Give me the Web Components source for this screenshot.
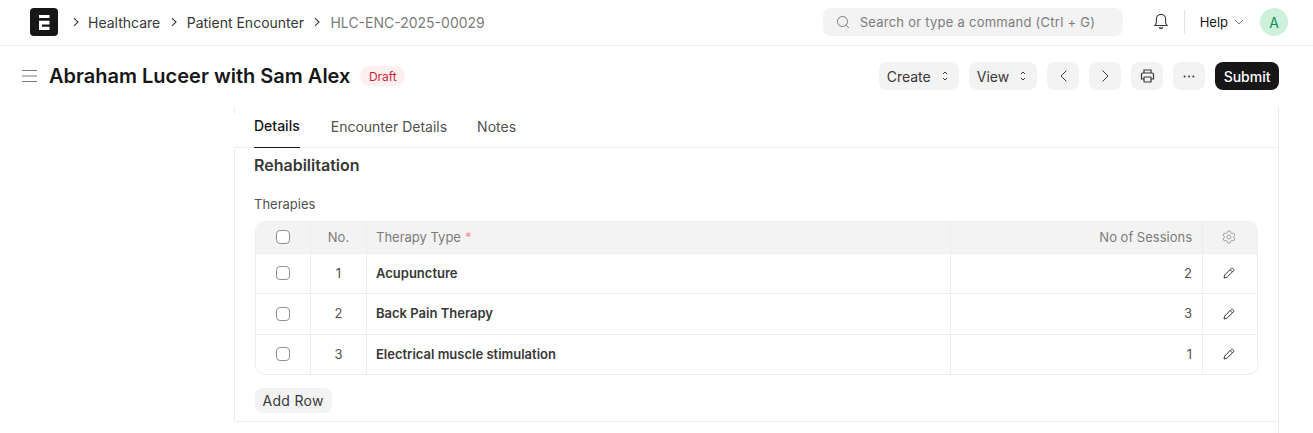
<!DOCTYPE html>
<html>
<head>
<meta charset="utf-8">
<title>Abraham Luceer with Sam Alex</title>
<style>
  html, body { margin: 0; height: 433px; overflow: hidden; background: #fff; }
  body { font-family: Inter, "Noto Sans", sans-serif; color: #383838; }
</style>
</head>
<body>
<app-navbar></app-navbar>
<page-head></page-head>
<form-card>
  <form-tabs></form-tabs>
  <therapy-section></therapy-section>
</form-card>

<script>
class AppNavbar extends HTMLElement {
  constructor() {
    super();
    this.attachShadow({ mode: "open" });
  }

  connectedCallback() {
    const sep = `<svg class="sep" width="8" height="10" viewBox="0 0 8 10" fill="none" stroke="#383838" stroke-width="1.1"><path d="M2 1.2 6 5 2 8.8"/></svg>`;
    this.shadowRoot.innerHTML = /* html */`
    <style>
      :host {
        display: flex;
        align-items: center;
        box-sizing: border-box;
        height: 46px;
        padding: 0 25px 1px 30px;
        border-bottom: 1px solid #ededed;
        font-size: 14px;
      }
      .logo {
        width: 28px;
        height: 28px;
        border-radius: 4px;
        background: #171717;
        display: flex;
        align-items: center;
        justify-content: center;
        margin-right: 14px;
      }
      .crumbs { display: flex; align-items: center; color: #383838; flex: 1; }
      .crumbs span { margin: 0 9.5px 0 9px; }
      .crumbs span:first-of-type { margin-left: 8px; }
      .crumbs span.now { color: #7c7c7c; }
      .search {
        box-sizing: border-box;
        width: 300px;
        height: 28px;
        border-radius: 8px;
        background: #f3f3f3;
        display: flex;
        align-items: center;
        gap: 10px;
        padding-left: 13px;
        color: #7c7c7c;
        font-size: 13px;
        letter-spacing: .25px;
      }
      .bell { display: flex; margin: 0 0 2px 30px; }
      .divider { width: 1px; height: 24px; background: #e2e2e2; margin: 0 15px; }
      .help { display: flex; align-items: center; gap: 6px; color: #171717; font-size: 13px; margin-right: 16px; }
      .avatar {
        width: 28px;
        height: 28px;
        border-radius: 50%;
        background: #ccf2dc;
        color: #178a52;
        font-size: 14px;
        display: flex;
        align-items: center;
        justify-content: center;
      }
    </style>
    <div class="logo">
      <svg width="11" height="15" viewBox="0 0 11 15" fill="#fff"><path d="M0 0h10.5v3H0zM0 5.7h10.5v3.8H3v2.2h7.5V15H0z"/></svg>
    </div>
    <div class="crumbs">
      ${sep}<span>Healthcare</span>${sep}<span>Patient Encounter</span>${sep}<span class="now">HLC-ENC-2025-00029</span>
    </div>
    <div class="search">
      <svg width="14" height="14" viewBox="0 0 14 14" fill="none" stroke="#7c7c7c" stroke-width="1"><circle cx="6.5" cy="6.5" r="5"/><path d="M10.2 10.2 13 13"/></svg>
      <span>Search or type a command (Ctrl + G)</span>
    </div>
    <div class="bell">
      <svg width="16" height="18" viewBox="0 0 16 18" fill="none" stroke="#383838" stroke-width="1.1"><path d="M2 13.5c1-1 1.4-2 1.4-4V7a4.6 4.6 0 0 1 9.2 0v2.5c0 2 .4 3 1.4 4z"/><path d="M6.3 15.3a1.8 1.8 0 0 0 3.4 0" stroke-width="1.3"/></svg>
    </div>
    <div class="divider"></div>
    <div class="help">Help
      <svg width="10" height="6" viewBox="0 0 10 6" fill="none" stroke="#7c7c7c" stroke-width="1"><path d="M1 1 5 5 9 1"/></svg>
    </div>
    <div class="avatar">A</div>
    `;
  }
}

class ActionButton extends HTMLElement {
  constructor() {
    super();
    this.attachShadow({ mode: "open" });
    this.shadowRoot.innerHTML = /* html */`
    <style>
      :host {
        display: inline-flex;
        align-items: center;
        justify-content: center;
        box-sizing: border-box;
        height: 28px;
        border-radius: 8px;
        background: #f3f3f3;
        color: #383838;
        font-size: 14px;
        gap: 11px;
      }
      :host([wide]) { padding: 0 11px 0 8px; }
      :host([icon]) { width: 32px; }
      :host([primary]) { background: #171717; color: #fff; padding: 0 8.5px; font-weight: 500; }
    </style>
    <slot></slot>
    `;
  }
}

class PageHead extends HTMLElement {
  constructor() {
    super();
    this.attachShadow({ mode: "open" });
  }

  connectedCallback() {
    const updown = `<svg width="6" height="12" viewBox="0 0 6 12" fill="none" stroke="#383838" stroke-width="1"><path d="M1 4 3 2l2 2M1 8l2 2 2-2"/></svg>`;
    this.shadowRoot.innerHTML = /* html */`
    <style>
      :host {
        display: flex;
        align-items: center;
        box-sizing: border-box;
        height: 60px;
        padding: 0 34px 0 22px;
      }
      .menu { display: flex; margin-right: 12px; }
      h1 {
        margin: 0;
        font-size: 20px;
        line-height: 28px;
        font-weight: 600;
        color: #171717;
      }
      .badge {
        margin-left: 10px;
        height: 20px;
        padding: 0 8.5px;
        border-radius: 10px;
        background: #fff0f0;
        color: #cc1f3d;
        font-size: 12px;
        display: flex;
        align-items: center;
      }
      .actions { margin-left: auto; display: flex; gap: 10px; }
    </style>
    <div class="menu">
      <svg width="15" height="14" viewBox="0 0 15 14" fill="none" stroke="#7c7c7c" stroke-width="1"><path d="M0 1.5h15M0 7h15M0 12.5h15"/></svg>
    </div>
    <h1>Abraham Luceer with Sam Alex</h1>
    <div class="badge">Draft</div>
    <div class="actions">
      <action-button wide>Create ${updown}</action-button>
      <action-button wide>View ${updown}</action-button>
      <action-button icon><svg width="7" height="12" viewBox="0 0 7 12" fill="none" stroke="#383838" stroke-width="1"><path d="M6.3 .7 1 6l5.3 5.3"/></svg></action-button>
      <action-button icon><svg width="7" height="12" viewBox="0 0 7 12" fill="none" stroke="#383838" stroke-width="1"><path d="M.7 .7 6 6 .7 11.3"/></svg></action-button>
      <action-button icon><svg width="15" height="14" viewBox="0 0 15 14" fill="none" stroke="#383838" stroke-width="1.2"><path d="M4 4V1h7v3M4 10H1.5V5.5A1.5 1.5 0 0 1 3 4h9a1.5 1.5 0 0 1 1.5 1.5V10H11"/><rect x="4" y="8" width="7" height="5" rx=".6"/></svg></action-button>
      <action-button icon><svg width="12" height="3" viewBox="0 0 12 3" fill="#383838"><circle cx="1.6" cy="1.5" r="1"/><circle cx="6" cy="1.5" r="1"/><circle cx="10.4" cy="1.5" r="1"/></svg></action-button>
      <action-button primary>Submit</action-button>
    </div>
    `;
  }
}

class FormCard extends HTMLElement {
  constructor() {
    super();
    this.attachShadow({ mode: "open" });
    this.shadowRoot.innerHTML = /* html */`
    <style>
      :host {
        display: block;
        box-sizing: border-box;
        width: 1045px;
        margin-left: 234px;
        height: 327px;
        border-right: 1px solid #ededed;
      }
    </style>
    <slot></slot>
    `;
  }
}

class FormTabs extends HTMLElement {
  constructor() {
    super();
    this.attachShadow({ mode: "open" });
    this.shadowRoot.innerHTML = /* html */`
    <style>
      :host {
        display: flex;
        box-sizing: border-box;
        height: 42px;
        padding-left: 20px;
        border-bottom: 1px solid #ededed;
        font-size: 14px;
        color: #525252;
        /* only a stub of the card's left edge shows above the tabs */
        background: linear-gradient(#ededed, #ededed) 0 0 / 1px 8px no-repeat;
      }
      div { height: 42px; box-sizing: border-box; line-height: 42px; margin-right: 30px; }
      .active {
        color: #171717;
        font-weight: 500;
        line-height: 40px;
        margin-right: 31px;
        border-bottom: 1px solid #171717;
      }
    </style>
    <div class="active">Details</div>
    <div>Encounter Details</div>
    <div>Notes</div>
    `;
  }
}

class TherapySection extends HTMLElement {
  constructor() {
    super();
    this.attachShadow({ mode: "open" });
  }

  rowHtml(no, name, count, height) {
    return /* html */`
    <div class="row ${height > 40 ? "tall" : ""}" style="height:${height}px">
      <div class="c check"><i class="box"></i></div>
      <div class="c no">${no}</div>
      <div class="c type">${name}</div>
      <div class="c count">${count}</div>
      <div class="c edit">
        <svg width="12" height="12" viewBox="0 0 12 12" fill="none" stroke="#383838" stroke-width="1"><path d="M1 11 1.7 8 8.3 1.4a1 1 0 0 1 1.4 0l.9.9a1 1 0 0 1 0 1.4L4 10.3z"/><path d="M7.2 2.6l2.2 2.2"/></svg>
      </div>
    </div>`;
  }

  connectedCallback() {
    this.shadowRoot.innerHTML = /* html */`
    <style>
      :host {
        display: block;
        box-sizing: border-box;
        height: 274px;
        padding: 7px 20px 0;
        border-left: 1px solid #ededed;
        border-bottom: 1px solid #ededed;
        font-size: 13px;
      }
      h2 {
        margin: 0 0 0 -1px;
        font-size: 16px;
        line-height: 21px;
        font-weight: 600;
        color: #383838;
      }
      .label { margin: 20px 0 0 -1px; line-height: 16px; font-size: 13px; color: #525252; }
      .grid {
        box-sizing: border-box;
        width: 1003px;
        margin-top: 9px;
        border: 1px solid #ededed;
        border-radius: 10px;
        overflow: hidden;
      }
      .row {
        display: grid;
        grid-template-columns: 54px 56px 584px 252px 55px;
        border-bottom: 1px solid #ededed;
        box-sizing: border-box;
      }
      .row:last-child { border-bottom: 0; }
      .head { background: #f3f3f3; color: #7c7c7c; }
      .c {
        display: flex;
        align-items: center;
        border-left: 1px solid #ededed;
        padding: 0 9px 1px;
        box-sizing: border-box;
        min-width: 0;
      }
      .c:first-child { border-left: 0; }
      .check, .no, .edit { justify-content: center; padding: 0 0 1px; }
      .edit { padding-right: 2px; }
      .count { justify-content: flex-end; padding-right: 10px; }
      .type { font-weight: 600; color: #383838; font-size: 13px; }
      .tall .type, .tall .no, .tall .count { padding-bottom: 2px; }
      .head .type { font-weight: 400; color: #7c7c7c; }
      .req { color: #f98a9e; margin-left: 4px; }
      .no, .count { color: #525252; }
      .head .no, .head .count { color: #7c7c7c; }
      .box {
        width: 14px;
        height: 14px;
        box-sizing: border-box;
        border: 1px solid #8f8f8f;
        border-radius: 4px;
        background: #fff;
      }
      .add {
        display: inline-flex;
        align-items: center;
        box-sizing: border-box;
        height: 25px;
        margin-top: 13px;
        padding: 0 8.5px 1px 7.5px;
        border-radius: 8px;
        background: #f3f3f3;
        color: #383838;
        font-size: 14px;
        letter-spacing: .3px;
      }
    </style>
    <h2>Rehabilitation</h2>
    <div class="label">Therapies</div>
    <div class="grid">
      <div class="row head" style="height:32px">
        <div class="c check"><i class="box"></i></div>
        <div class="c no">No.</div>
        <div class="c type">Therapy Type<span class="req">*</span></div>
        <div class="c count">No of Sessions</div>
        <div class="c edit">
          <svg width="14" height="14" viewBox="0 0 14 14" fill="none" stroke="#a3a3a3" stroke-width="1"><path d="M5.8 1h2.4l.4 1.7 1.5.9 1.7-.5 1.2 2-1.3 1.2v1.4l1.3 1.2-1.2 2-1.7-.5-1.5.9L8.2 13H5.8l-.4-1.7-1.5-.9-1.7.5-1.2-2 1.3-1.2V6.3L1 5.1l1.2-2 1.7.5 1.5-.9z"/><circle cx="7" cy="7" r="2"/></svg>
        </div>
      </div>
      ${this.rowHtml(1, "Acupuncture", 2, 40)}
      ${this.rowHtml(2, "Back Pain Therapy", 3, 41)}
      ${this.rowHtml(3, "Electrical muscle stimulation", 1, 39)}
    </div>
    <div class="add">Add Row</div>
    `;
  }
}

customElements.define("app-navbar", AppNavbar);
customElements.define("action-button", ActionButton);
customElements.define("page-head", PageHead);
customElements.define("form-card", FormCard);
customElements.define("form-tabs", FormTabs);
customElements.define("therapy-section", TherapySection);
</script>
</body>
</html>
